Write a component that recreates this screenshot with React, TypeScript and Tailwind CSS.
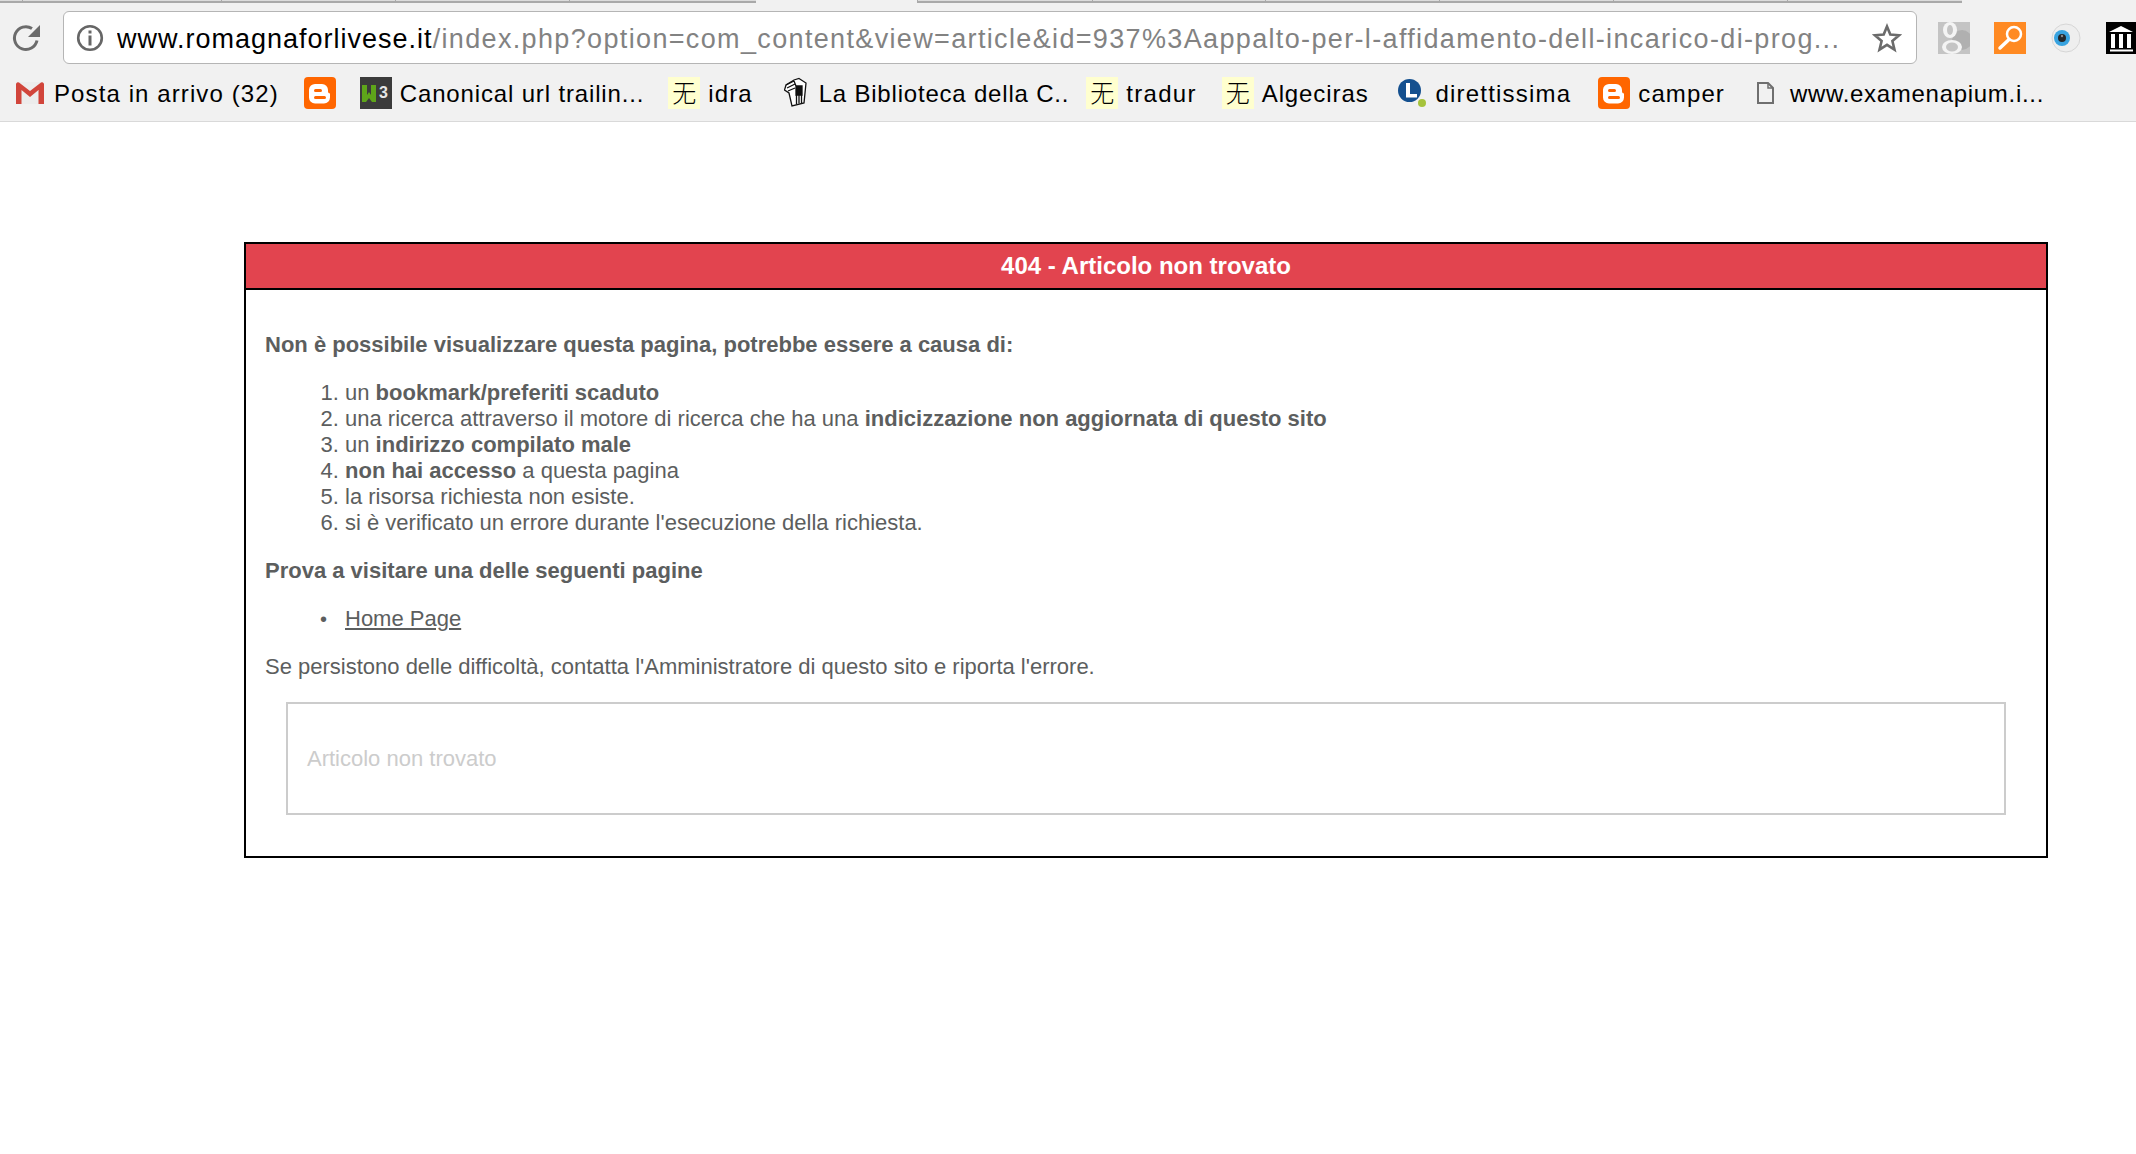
const sans = "font-['Liberation_Sans',Arial,sans-serif]";

const tabTicks = [
  { w: "w-[22px]", tick: false, line: true },
  { w: "w-[199px]", tick: true, line: true },
  { w: "w-[174px]", tick: true, line: true },
  { w: "w-[174px]", tick: true, line: true },
  { w: "w-[187px]", tick: true, line: true },
  { w: "w-[161px]", tick: false, line: false },
  { w: "w-[175px]", tick: true, line: true },
  { w: "w-[173px]", tick: true, line: true },
  { w: "w-[174px]", tick: true, line: true },
  { w: "w-[174px]", tick: true, line: true },
  { w: "w-[174px]", tick: true, line: true },
  { w: "w-[175px]", tick: true, line: true },
];

function Blogger() {
  return (
    <svg width="32" height="32" viewBox="0 0 32 32">
      <rect width="32" height="32" rx="4" fill="#ff6600" />
      <path d="M11 7h7a6 6 0 0 1 6 6v1.500a2 2 0 0 0 2 2v4a6 6 0 0 1-6 6h-9a6 6 0 0 1-6-6v-8a6 6 0 0 1 6-5.500z" fill="#fff" />
      <rect x="10" y="12" width="8" height="3" rx="1.500" fill="#ff6600" />
      <rect x="10" y="19" width="12" height="3" rx="1.500" fill="#ff6600" />
    </svg>
  );
}

function Wu() {
  return (
    <span className="flex h-8 w-8 shrink-0 items-center justify-center bg-[#ffffcf] pb-[3px] font-['Noto_Sans_CJK_SC',sans-serif] text-[24px] font-light leading-none text-black">
      无
    </span>
  );
}

function Gmail() {
  return (
    <svg width="28" height="22" viewBox="0 0 28 22">
      <rect x="0" y="0" width="28" height="22" rx="1.500" fill="#ececec" />
      <path d="M0 2a2 2 0 0 1 3-1.500L14 9 25 .5A2 2 0 0 1 28 2v20h-5.500V8L14 15 5.500 8v14H0z" fill="#d1453b" />
    </svg>
  );
}

function W3() {
  return (
    <svg width="32" height="32" viewBox="0 0 32 32">
      <rect width="32" height="32" fill="#3b3b3b" />
      <path d="M2 8h5v10l2-3 2 3V8h5v17h-4l-3-4-3 4H2z" fill="#5ea51a" />
      <text x="19" y="21" fill="#e6e6e6" fontSize="16" fontWeight="700" fontFamily="Liberation Sans">3</text>
    </svg>
  );
}

function Library() {
  return (
    <svg width="24" height="32" viewBox="0 -1 24 32" fill="none" stroke="#111" strokeWidth="1.300">
      <path d="M15 0.500l7 4.500-2 20-12 3-3-13-4.500-3 1.500-5 8-5z" fill="#fff" />
      <path d="M12 8h6v9h-6z" fill="#111" />
      <path d="M12.500 17v9M15 17v8.500M17.500 17v8" />
      <path d="M2 7l8-4M3 10l8-4M4 13l7-3M10 3l2 5" />
    </svg>
  );
}

function LogoL() {
  return (
    <svg width="30" height="34" viewBox="0 0 30 34">
      <circle cx="13.500" cy="14.500" r="11.500" fill="#14508f" />
      <path d="M10 7h4v11h7v3.500H10z" fill="#fff" />
      <circle cx="26" cy="27" r="4" fill="#a6c33c" />
    </svg>
  );
}

function Doc() {
  return (
    <svg width="17" height="22" viewBox="0 0 17 22" fill="none" stroke="#6f6f6f" strokeWidth="2">
      <path d="M1 1h10l5 5v15H1z" />
      <path d="M11 1v5h5" strokeWidth="1.500" />
    </svg>
  );
}

function Reload() {
  return (
    <svg width="30" height="30" viewBox="0 0 30 30" fill="none">
      <path d="M25 17.500A11.400 11.400 0 1 1 20 5.500" stroke="#6b6b6b" strokeWidth="3" />
      <path d="M28 2v12H16z" fill="#6b6b6b" />
    </svg>
  );
}

function Info() {
  return (
    <svg width="28" height="28" viewBox="0 0 28 28" fill="none">
      <circle cx="14" cy="14" r="11.800" stroke="#666" strokeWidth="2.600" />
      <rect x="12.500" y="6.500" width="3" height="3" fill="#666" />
      <rect x="12.500" y="11.500" width="3" height="10" fill="#666" />
    </svg>
  );
}

function Star() {
  return (
    <svg width="30" height="30" viewBox="0 0 30 30" fill="none">
      <path d="M15 3.500l3.300 8.100 8.800.7-6.700 5.700 2.100 8.600L15 21.900l-7.500 4.700 2.100-8.600-6.700-5.700 8.800-.7z" stroke="#6b6b6b" strokeWidth="2.600" strokeLinejoin="miter" />
    </svg>
  );
}

function GooglePlus() {
  return (
    <svg width="32" height="32" viewBox="0 0 32 32" className="shrink-0">
      <rect width="32" height="32" fill="#c4c4c4" />
      <circle cx="24" cy="18" r="10" fill="#b0b0b0" />
      <ellipse cx="12" cy="8" rx="7" ry="8" fill="#f4f4f4" />
      <ellipse cx="12" cy="8" rx="3" ry="5" fill="#c4c4c4" />
      <ellipse cx="14" cy="25" rx="10" ry="7" fill="#f4f4f4" />
      <ellipse cx="14" cy="25" rx="6" ry="4.500" fill="#c4c4c4" />
    </svg>
  );
}

function OrangeSearch() {
  return (
    <svg width="32" height="32" viewBox="0 0 32 32" className="shrink-0">
      <rect width="32" height="32" fill="#ff8a23" />
      <circle cx="20" cy="12" r="7" fill="none" stroke="#fff" strokeWidth="2.500" />
      <path d="M15 17.500L6 26" stroke="#fff" strokeWidth="3.500" strokeLinecap="round" />
    </svg>
  );
}

function Eye() {
  return (
    <svg width="30" height="30" viewBox="0 0 30 30" className="shrink-0">
      <circle cx="15" cy="15" r="14" fill="#eeeeee" stroke="#d6d6d6" />
      <circle cx="11" cy="15" r="8" fill="#38a3e0" />
      <circle cx="11" cy="15" r="4" fill="#23272b" />
      <circle cx="11" cy="13" r="1.200" fill="#8a8a8a" />
    </svg>
  );
}

function Museum() {
  return (
    <svg width="30" height="32" viewBox="0 0 30 32" className="shrink-0">
      <rect width="30" height="32" fill="#000" />
      <path d="M15 4L27 10H3z" fill="#fff" />
      <path d="M5 12h4v14H5zM13 12h4v14h-4zM21 12h4v14h-4z" fill="#fff" />
      <rect x="4" y="27.500" width="23" height="2" fill="#fff" />
    </svg>
  );
}

function BookmarkText({ children, className }: { children: string; className: string }) {
  return <span className={`whitespace-nowrap pt-[1px] ${className}`}>{children}</span>;
}

export default function App() {
  return (
    <div className={`min-h-screen overflow-hidden bg-white ${sans}`}>
      <header className="h-[122px] overflow-hidden border-b border-[#d9d9d9] bg-[#f1f1f1]">
        <div className="flex h-[3px]">
          {tabTicks.map((t, i) => (
            <span
              key={i}
              className={`${t.w} ${t.line ? "border-b-2 border-[#a9a9a9] bg-[#dcdcdc]" : ""} ${t.tick ? "border-l" : ""}`}
            />
          ))}
        </div>
        <div className="mt-[8px] flex h-[53px] items-center">
          <span className="ml-[12px] flex w-[30px] justify-center"><Reload /></span>
          <div className="ml-[21px] flex h-[53px] w-[1854px] items-center rounded-[6px] border border-[#b5b5b5] bg-white">
            <span className="ml-[12px] shrink-0"><Info /></span>
            <div className="ml-[13px] w-[1726px] overflow-hidden whitespace-nowrap pt-[2px] text-[27px] leading-[36px] tracking-[1.35px] text-[#828282]">
              <span className="tracking-[1px] text-black">www.romagnaforlivese.it</span>/index.php?option=com_content&amp;view=article&amp;id=937%3Aappalto-per-l-affidamento-dell-incarico-di-prog...
            </div>
            <span className="ml-[29px] shrink-0"><Star /></span>
          </div>
          <span className="ml-[21px]"><GooglePlus /></span>
          <span className="ml-[24px]"><OrangeSearch /></span>
          <span className="ml-[25px]"><Eye /></span>
          <span className="ml-[25px]"><Museum /></span>
        </div>
        <nav className="mt-[11px] flex h-[36px] items-center text-[24px] leading-[36px] text-black">
          <span className="ml-[16px]"><Gmail /></span>
          <BookmarkText className="ml-[10px] tracking-[1.1px]">Posta in arrivo (32)</BookmarkText>
          <span className="ml-[25px]"><Blogger /></span>
          <span className="ml-[24px]"><W3 /></span>
          <BookmarkText className="ml-[8px] tracking-[0.85px]">Canonical url trailin...</BookmarkText>
          <span className="ml-[24px]"><Wu /></span>
          <BookmarkText className="ml-[8px] tracking-[1.1px]">idra</BookmarkText>
          <span className="ml-[31px]"><Library /></span>
          <BookmarkText className="ml-[11px] tracking-[0.8px]">La Biblioteca della C..</BookmarkText>
          <span className="ml-[17px]"><Wu /></span>
          <BookmarkText className="ml-[8px] tracking-[1.3px]">tradur</BookmarkText>
          <span className="ml-[25px]"><Wu /></span>
          <BookmarkText className="ml-[8px] tracking-[0.9px]">Algeciras</BookmarkText>
          <span className="ml-[27px]"><LogoL /></span>
          <BookmarkText className="ml-[10px] tracking-[1.2px]">direttissima</BookmarkText>
          <span className="ml-[27px]"><Blogger /></span>
          <BookmarkText className="ml-[8px] tracking-[1.1px]">camper</BookmarkText>
          <span className="ml-[32px]"><Doc /></span>
          <BookmarkText className="ml-[16px] tracking-[0.7px]">www.examenapium.i...</BookmarkText>
        </nav>
      </header>

      <main className="ml-[244px] mt-[120px] w-[1804px] border-2 border-black bg-white text-[22px] leading-[26px] text-[#5c5e5e]">
        <h1 className="h-[46px] border-b-2 border-black bg-[#e2444f] text-center text-[24px] font-bold leading-[44px] text-white">
          404 - Articolo non trovato
        </h1>
        <div className="px-[19px] pb-[41px] pt-[42px]">
          <p className="font-bold">Non è possibile visualizzare questa pagina, potrebbe essere a causa di:</p>
          <ol className="mt-[22px] list-decimal pl-[80px]">
            <li>un <b>bookmark/preferiti scaduto</b></li>
            <li>una ricerca attraverso il motore di ricerca che ha una <b>indicizzazione non aggiornata di questo sito</b></li>
            <li>un <b>indirizzo compilato male</b></li>
            <li><b>non hai accesso</b> a questa pagina</li>
            <li>la risorsa richiesta non esiste.</li>
            <li>si è verificato un errore durante l'esecuzione della richiesta.</li>
          </ol>
          <p className="mt-[22px] font-bold">Prova a visitare una delle seguenti pagine</p>
          <ul className="mt-[22px] list-none pl-[80px]">
            <li className="before:absolute before:-ml-[25px] before:text-[20px] before:content-['•']"><a className="underline">Home Page</a></li>
          </ul>
          <p className="mt-[22px]">Se persistono delle difficoltà, contatta l'Amministratore di questo sito e riporta l'errore.</p>
          <div className="mx-[21px] mt-[22px] flex h-[113px] items-center border-2 border-[#cccccc] pl-[19px] text-[#cccccc]">
            Articolo non trovato
          </div>
        </div>
      </main>
    </div>
  );
}
